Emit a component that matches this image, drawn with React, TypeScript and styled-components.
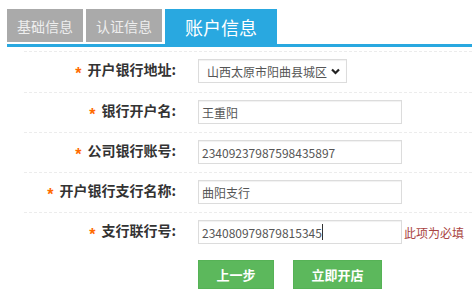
import styled, { createGlobalStyle } from "styled-components";

const GlobalStyle = createGlobalStyle`
  html, body {
    margin: 0;
    padding: 0;
    background: #fff;
  }
  body {
    font-family: "Noto Sans CJK SC", "Liberation Sans", sans-serif;
  }
`;

const Page = styled.div`
  width: 472px;
  height: 304px;
  overflow: hidden;
  padding: 9px 0 0 7px;
  box-sizing: border-box;
`;

const TabBar = styled.div`
  display: flex;
  align-items: flex-start;
  gap: 3px;
  height: 35px;
  border-bottom: 3px solid #29a8e0;
`;

const Tab = styled.div<{ $active?: boolean }>`
  display: flex;
  align-items: center;
  justify-content: center;
  width: ${(p) => (p.$active ? "112px" : "76px")};
  height: ${(p) => (p.$active ? "35px" : "33px")};
  background: ${(p) => (p.$active ? "#29a8e0" : "#aaaaaa")};
  color: ${(p) => (p.$active ? "#ffffff" : "#eeeeee")};
  font-size: ${(p) => (p.$active ? "18px" : "14px")};
  line-height: 1;
`;

const Form = styled.div`
  margin: 4px 0 0 17px;
  border-top: 1px dashed #ececec;
`;

const Row = styled.div<{ $last?: boolean; $first?: boolean }>`
  display: flex;
  align-items: center;
  padding: 7px 0 ${(p) => (p.$first ? "9px" : "8px")};
  border-bottom: ${(p) => (p.$last ? "none" : "1px dashed #ececec")};
`;

const Label = styled.div`
  width: 152px;
  flex-shrink: 0;
  text-align: right;
  font-size: 14px;
  font-weight: bold;
  color: #333;
  white-space: nowrap;
  margin-right: 22px;
`;

const Star = styled.span`
  color: #ff6a00;
  font-family: "Liberation Sans", sans-serif;
  font-size: 16px;
  font-weight: bold;
  vertical-align: -4px;
  margin-right: 6px;
`;

const Field = styled.div<{ $width?: number }>`
  display: flex;
  align-items: center;
  box-sizing: border-box;
  width: ${(p) => p.$width ?? 204}px;
  height: 24px;
  border: 1px solid #dcdcdc;
  box-shadow: inset 0 1px 1px rgba(0, 0, 0, 0.06);
  padding: 0 0 0 3px;
  font-size: 12px;
  color: #555;
  white-space: nowrap;
`;

const SelectBox = styled(Field)`
  padding-left: 8px;
  gap: 4px;
`;

const Caret = styled.span`
  display: inline-block;
  width: 1px;
  height: 16px;
  background: #333;
`;

const ErrorText = styled.span`
  margin-left: 2px;
  font-size: 12px;
  color: #a94442;
`;

const Actions = styled.div`
  display: flex;
  gap: 19px;
  padding: 8px 0 0 191px;
`;

const Button = styled.div<{ $width: number }>`
  display: flex;
  align-items: center;
  justify-content: center;
  box-sizing: border-box;
  width: ${(p) => p.$width}px;
  height: 29px;
  background: #5cb85c;
  border: 1px solid #56b256;
  color: #fff;
  font-size: 13px;
  font-weight: bold;
`;

function Chevron() {
  return (
    <svg width="9" height="7" viewBox="0 0 9 7">
      <polyline
        points="1,1.5 4.5,5 8,1.5"
        fill="none"
        stroke="#222"
        strokeWidth="2.2"
      />
    </svg>
  );
}

export default function App() {
  return (
    <Page>
      <GlobalStyle />
      <TabBar>
        <Tab>基础信息</Tab>
        <Tab>认证信息</Tab>
        <Tab $active>账户信息</Tab>
      </TabBar>
      <Form>
        <Row $first>
          <Label>
            <Star>*</Star>开户银行地址:
          </Label>
          <SelectBox $width={149}>
            山西太原市阳曲县城区
            <Chevron />
          </SelectBox>
        </Row>
        <Row>
          <Label>
            <Star>*</Star>银行开户名:
          </Label>
          <Field>王重阳</Field>
        </Row>
        <Row>
          <Label>
            <Star>*</Star>公司银行账号:
          </Label>
          <Field>23409237987598435897</Field>
        </Row>
        <Row>
          <Label>
            <Star>*</Star>开户银行支行名称:
          </Label>
          <Field>曲阳支行</Field>
        </Row>
        <Row $last>
          <Label>
            <Star>*</Star>支行联行号:
          </Label>
          <Field>
            234080979879815345
            <Caret />
          </Field>
          <ErrorText>此项为必填</ErrorText>
        </Row>
      </Form>
      <Actions>
        <Button $width={76}>上一步</Button>
        <Button $width={89}>立即开店</Button>
      </Actions>
    </Page>
  );
}
